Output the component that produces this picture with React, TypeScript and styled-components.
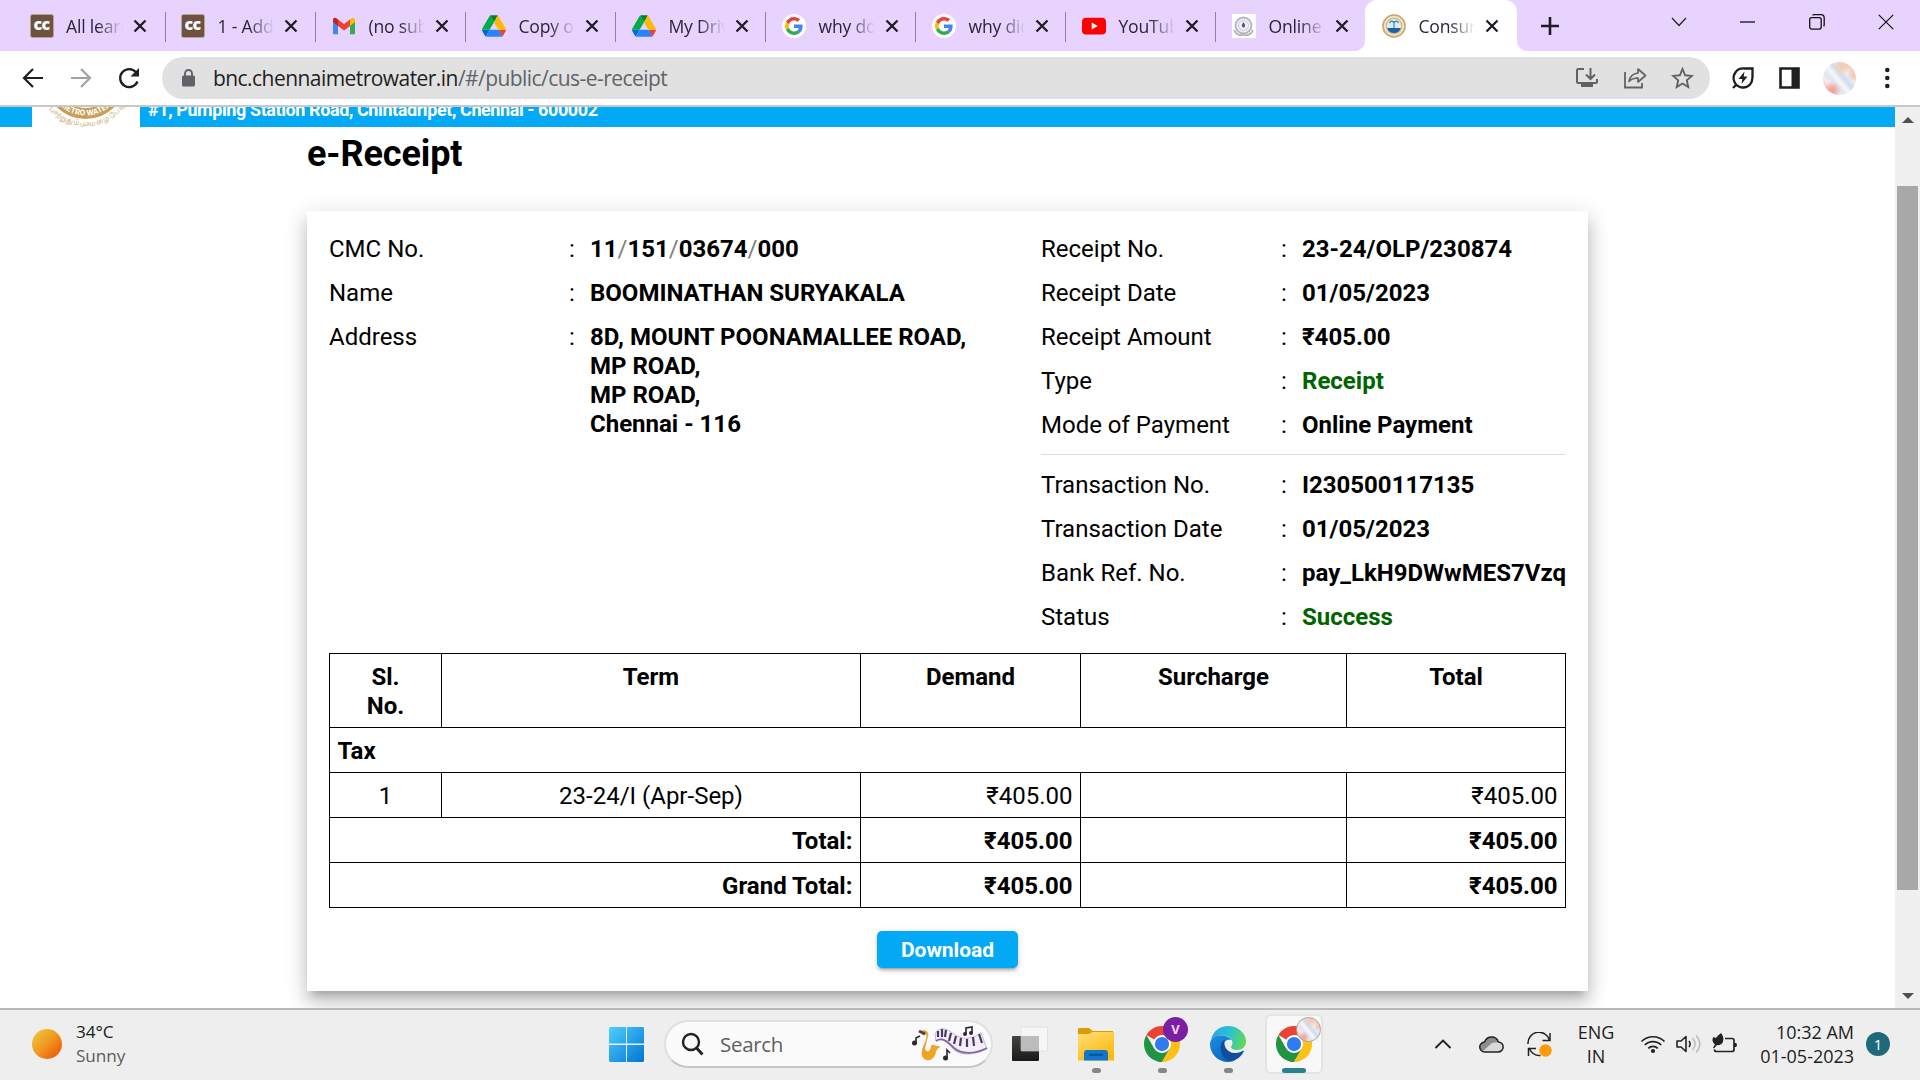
import React from "react";
import styled, { createGlobalStyle } from "styled-components";

const UI = `"Open Sans", "Noto Sans", sans-serif`;

const GlobalStyle = createGlobalStyle`
  * { box-sizing: border-box; }
  html, body { margin: 0; padding: 0; }
  body { width: 1920px; height: 1080px; overflow: hidden; background: #fff; font-family: Roboto, sans-serif; color: #000; }
  svg { display: block; flex: none; }
`;

const Screen = styled.div`
  width: 1920px;
  height: 1080px;
  display: flex;
  flex-direction: column;
  overflow: hidden;
`;

/* ---------- browser chrome ---------- */

const TabStrip = styled.div`
  height: 51px;
  flex: none;
  background: #e8d3ff;
  display: flex;
  padding-left: 14.8px;
  font-family: ${UI};
`;

const Tab = styled.div<{ $active?: boolean }>`
  width: ${(p) => (p.$active ? 152 : 150)}px;
  flex: none;
  display: flex;
  align-items: center;
  position: relative;
  background: ${(p) => (p.$active ? "#fff" : "transparent")};
  border-radius: 12px 12px 0 0;
  &::before, &::after {
    content: ${(p) => (p.$active ? '""' : "none")};
    position: absolute;
    bottom: 0;
    width: 10px;
    height: 10px;
  }
  &::before { left: -10px; background: radial-gradient(circle at 0 0, transparent 9.5px, #fff 10.2px); }
  &::after { right: -10px; background: radial-gradient(circle at 100% 0, transparent 9.5px, #fff 10.2px); }
`;

const Separator = styled.i<{ $show: boolean; $gap: number }>`
  width: 1.5px;
  height: 30px;
  background: ${(p) => (p.$show ? "#8f8399" : "transparent")};
  margin: 2px ${(p) => p.$gap}px 0 0;
`;

const TabTitle = styled.span`
  width: 57px;
  margin-left: 12px;
  font-size: 17.6px;
  line-height: 24px;
  letter-spacing: -0.2px;
  white-space: nowrap;
  overflow: hidden;
  color: #2c2533;
  mask-image: linear-gradient(90deg, #000 55%, transparent 100%);
`;

const TabClose = styled.span`
  margin-left: 10px;
`;

const NewTab = styled.div`
  width: 66px;
  display: flex;
  align-items: center;
  justify-content: center;
`;

const WindowControls = styled.div`
  margin-left: auto;
  display: flex;
  height: 44px;
`;

const WindowButton = styled.div`
  width: 69px;
  display: flex;
  align-items: center;
  justify-content: center;
`;

const Toolbar = styled.div`
  height: 56px;
  flex: none;
  background: #fff;
  border-bottom: 2px solid #c8c8c8;
  display: flex;
  align-items: center;
  padding-left: 9px;
`;

const NavButton = styled.div`
  width: 48px;
  display: flex;
  justify-content: center;
`;

const Omnibox = styled.div`
  width: 1548px;
  height: 42px;
  margin-left: 9px;
  border-radius: 21px;
  background: #e1e1e1;
  display: flex;
  align-items: center;
  padding: 0 16px 0 20px;
  font-family: ${UI};
`;

const Url = styled.span`
  margin-left: 18px;
  font-size: 21px;
  line-height: 28px;
  letter-spacing: -0.555px;
  color: #5f6368;
  b { font-weight: 400; color: #1f1f22; }
`;

const OmniActions = styled.div`
  margin-left: auto;
  display: flex;
  align-items: center;
  gap: 24px;
`;

const ToolbarActions = styled.div`
  display: flex;
  align-items: center;
  margin-left: 21px;
  gap: 22px;
`;

const Avatar = styled.div<{ $size: number; $ring?: boolean }>`
  width: ${(p) => p.$size}px;
  height: ${(p) => p.$size}px;
  border-radius: 50%;
  border: ${(p) => (p.$ring ? "1.5px solid #a9a5a8" : "0")};
  background:
    radial-gradient(circle at 28% 86%, #f0a5a0 0 6%, transparent 24%),
    radial-gradient(circle at 60% 8%, #f4cdb9 0 10%, transparent 30%),
    radial-gradient(circle at 94% 40%, #f5cabd 0 5%, transparent 20%),
    linear-gradient(50deg, #f5c3bf 0 14%, #f9e9e5 24%, #dde6f3 36%, #faf6f5 46%, #cbdcf1 58%, #f6f1f2 70%, #f6d5cb 82%, #f7ece8);
`;

/* ---------- page ---------- */

const Viewport = styled.div`
  height: 901px;
  flex: none;
  display: flex;
  overflow: hidden;
`;

const Page = styled.main`
  width: 1895px;
  overflow: hidden;
  background: #fff;
`;

const Banner = styled.div`
  height: 20px;
  overflow: hidden;
  background: #03a9f4;
  display: flex;
  padding-left: 32px;
  color: #fff;
`;

const LogoBox = styled.div`
  width: 108px;
  height: 20px;
  background: #fff;
`;

const BannerText = styled.div`
  margin: -8px 0 0 8px;
  font-size: 18px;
  font-weight: 700;
  line-height: 22px;
  letter-spacing: -0.41px;
  white-space: nowrap;
`;

const Content = styled.div`
  width: 1281px;
  margin: 0 auto;
`;

const Heading = styled.h1`
  margin: 0;
  padding-top: 6px;
  height: 84px;
  font-size: 36px;
  font-weight: 700;
  line-height: 42px;
  letter-spacing: -0.1px;
`;

const Card = styled.section`
  height: 780px;
  padding: 16px 22px 0;
  background: #fff;
  box-shadow: 0 7.5px 7.5px -4.5px rgba(0, 0, 0, 0.2), 0 12px 15px 1.5px rgba(0, 0, 0, 0.14),
    0 4.5px 21px 3px rgba(0, 0, 0, 0.12);
`;

const Details = styled.div`
  display: grid;
  grid-template-columns: 712px 1fr;
`;

const Field = styled.div`
  display: grid;
  grid-template-columns: 240px 21px max-content;
  padding: 7.5px 0;
  font-size: 24px;
  line-height: 29px;
`;

const Value = styled.div<{ $good?: boolean }>`
  font-weight: 700;
  white-space: pre-line;
  color: ${(p) => (p.$good ? "#006400" : "#000")};
`;

const Slash = styled.span`
  font-weight: 400;
  color: #808080;
`;

const Rule = styled.div`
  height: 1px;
  margin: 7px 0 8px;
  background: #dcdcdc;
`;

const Table = styled.table`
  width: 1237px;
  margin-top: 13.5px;
  table-layout: fixed;
  border-collapse: collapse;
  font-size: 24px;
  line-height: 29px;
`;

const Cell = styled.td<{ $align?: string; $bold?: boolean }>`
  border: 1px solid #000;
  padding: 9px 7.5px 6px;
  vertical-align: top;
  text-align: ${(p) => p.$align || "left"};
  font-weight: ${(p) => (p.$bold ? 700 : 400)};
`;

const Actions = styled.div`
  margin-top: 23px;
  display: flex;
  justify-content: center;
`;

const DownloadButton = styled.button`
  width: 141px;
  height: 37px;
  border: 0;
  border-radius: 5px;
  padding: 1px 0 0;
  background: #03a9f4;
  color: #fff;
  font: 700 21px/37px Roboto, sans-serif;
  box-shadow: 0 4px 2px -3px rgba(0, 0, 0, 0.2), 0 3px 3px rgba(0, 0, 0, 0.14), 0 1.5px 7px rgba(0, 0, 0, 0.12);
`;

const Scrollbar = styled.div`
  width: 25px;
  background: #f0f0f0;
  display: flex;
  flex-direction: column;
  align-items: center;
  padding: 10px 0 9px;
`;

const Thumb = styled.div`
  width: 21px;
  height: 704px;
  margin: 63px 0 auto;
  background: #a8a8a8;
`;

/* ---------- taskbar ---------- */

const Taskbar = styled.footer`
  flex: 1;
  background: #eeeeee;
  border-top: 2px solid #bababa;
  padding-bottom: 2px;
  display: flex;
  align-items: center;
  font-family: ${UI};
  color: #1d1d1d;
`;

const Weather = styled.div`
  width: 577px;
  padding-left: 32px;
  display: flex;
  align-items: center;
  gap: 14px;
  font-size: 17.2px;
  line-height: 24px;
  letter-spacing: -0.1px;
  small { display: block; font-size: inherit; color: #5c5c5c; }
`;

const Sun = styled.i`
  width: 30px;
  height: 30px;
  border-radius: 50%;
  background: linear-gradient(135deg, #eec03a 12%, #f0971f 50%, #f0670d 80%);
`;

const SearchPill = styled.div`
  width: 329px;
  height: 48px;
  margin-left: 20px;
  border: 2px solid #e0e0e0;
  border-bottom-color: #c6c6c6;
  border-radius: 24px;
  background: #fafafa;
  display: flex;
  align-items: center;
  padding: 0 3px 0 15px;
  span { margin-left: 15px; font-size: 20.5px; letter-spacing: -0.3px; color: #5f5f5f; }
  svg:last-child { margin-left: auto; }
`;

const StartSlot = styled.div`
  width: 67px;
  padding-left: 32px;
`;

const Apps = styled.div`
  display: flex;
  margin-left: 4px;
`;

const AppSlot = styled.div<{ $active?: boolean }>`
  width: 58px;
  height: 60px;
  margin: 0 4px;
  border-radius: 6px;
  border: 2px solid ${(p) => (p.$active ? "#e4e4e4" : "transparent")};
  background: ${(p) => (p.$active ? "#f8f8f8" : "transparent")};
  display: flex;
  flex-direction: column;
  align-items: center;
  padding-top: 10px;
  position: relative;
`;

const Running = styled.i<{ $active?: boolean }>`
  width: ${(p) => (p.$active ? 24 : 9)}px;
  height: 5px;
  flex: none;
  margin-top: 6px;
  border-radius: 3px;
  background: ${(p) => (p.$active ? "#28838f" : "#868686")};
`;

const Badge = styled.div`
  position: absolute;
  top: 1px;
  right: 1px;
  width: 25px;
  height: 25px;
  border-radius: 50%;
  background: #7b1fa2;
  color: #f0d9f7;
  font: 700 13px/25px "Open Sans", sans-serif;
  text-align: center;
`;

const BadgeAvatar = styled.div`
  position: absolute;
  top: 1px;
  right: 0;
`;

const Tray = styled.div`
  margin-left: auto;
  display: flex;
  align-items: center;
  padding-right: 30px;
`;

const TrayItem = styled.div<{ $w: number; $nudge?: number }>`
  width: ${(p) => p.$w}px;
  padding-right: ${(p) => p.$nudge || 0}px;
  display: flex;
  justify-content: center;
`;

const TrayText = styled.div<{ $w: number; $align: string }>`
  width: ${(p) => p.$w}px;
  text-align: ${(p) => p.$align};
  font-size: 18px;
  line-height: 24px;
  letter-spacing: -0.02px;
  white-space: pre-line;
`;

const Count = styled.div`
  width: 24px;
  height: 24px;
  margin-left: 12px;
  border-radius: 50%;
  background: #20697a;
  color: #fff;
  font-size: 15px;
  line-height: 24px;
  text-align: center;
`;

/* ---------- drawings ---------- */

const stroke = (c: string, w: number) => ({ fill: "none", stroke: c, strokeWidth: w });

const CcFav = () => (
  <svg width="24" height="24">
    <rect x=".5" y=".5" width="23" height="23" rx="2" fill="#6d5241" stroke="#b7a48f" />
    <text x="11.600" y="16" textAnchor="middle" fontFamily="Open Sans" fontWeight="800" fontSize="16" letterSpacing="-.6" fill="#fff">cc</text>
  </svg>
);
const GmailFav = () => (
  <svg width="24" height="24" viewBox="0 0 24 24">
    <path d="M1 6v13c0 .9.6 1.3 1.4 1.3H6V11z" fill="#4285f4" />
    <path d="M23 6v13c0 .9-.6 1.3-1.4 1.3H18V11z" fill="#34a853" />
    <path d="M18 5.4 20 4c1.400-.9 3 .1 3 1.700V8l-5 3.900z" fill="#fbbc04" />
    <path d="M6 5.400 12 10l6-4.600v6.500l-6 4.600-6-4.600z" fill="#ea4335" />
    <path d="M6 5.400 4 4C2.600 3.100 1 4.100 1 5.700V8l5 3.900z" fill="#c5221f" />
  </svg>
);
const DriveFav = () => (
  <svg width="24" height="24" viewBox="0 0 87.3 78">
    <path d="m6.6 66.850 3.850 6.650c.8 1.400 1.950 2.500 3.300 3.300l13.750-23.800h-27.500c0 1.550.4 3.100 1.200 4.500z" fill="#0066da" />
    <path d="m43.650 25-13.750-23.800c-1.350.8-2.500 1.900-3.300 3.300l-25.400 44a9.060 9.060 0 0 0 -1.200 4.500h27.500z" fill="#00ac47" />
    <path d="m73.550 76.800c1.350-.8 2.500-1.900 3.300-3.300l1.600-2.750 7.650-13.250c.8-1.400 1.200-2.950 1.200-4.500h-27.502l5.852 11.500z" fill="#ea4335" />
    <path d="m43.650 25 13.750-23.800c-1.350-.8-2.900-1.200-4.500-1.200h-18.500c-1.600 0-3.150.45-4.500 1.200z" fill="#00832d" />
    <path d="m59.800 53h-32.300l-13.750 23.800c1.350.8 2.900 1.200 4.500 1.200h50.800c1.600 0 3.150-.45 4.500-1.200z" fill="#2684fc" />
    <path d="m73.400 26.500-12.700-22c-.8-1.400-1.950-2.500-3.300-3.300l-13.750 23.800 16.150 28h27.450c0-1.550-.4-3.100-1.200-4.500z" fill="#ffba00" />
  </svg>
);
const GoogleFav = () => (
  <svg width="24" height="24" viewBox="0 0 24 24">
    <circle cx="12" cy="12" r="12" fill="#fff" />
    <g transform="translate(3 3) scale(.375)">
      <path fill="#EA4335" d="M24 9.500c3.540 0 6.710 1.220 9.210 3.600l6.850-6.850C35.900 2.380 30.470 0 24 0 14.620 0 6.510 5.380 2.560 13.220l7.980 6.190C12.430 13.720 17.740 9.500 24 9.500z" />
      <path fill="#4285F4" d="M46.980 24.550c0-1.570-.15-3.090-.38-4.550H24v9.020h12.940c-.58 2.960-2.260 5.480-4.780 7.180l7.730 6c4.510-4.180 7.090-10.360 7.090-17.650z" />
      <path fill="#FBBC05" d="M10.530 28.590c-.48-1.450-.76-2.990-.76-4.590s.27-3.140.76-4.590l-7.980-6.190C.92 16.460 0 20.120 0 24c0 3.880.92 7.540 2.560 10.780l7.970-6.190z" />
      <path fill="#34A853" d="M24 48c6.480 0 11.930-2.130 15.890-5.810l-7.730-6c-2.150 1.450-4.920 2.300-8.160 2.300-6.260 0-11.570-4.220-13.470-9.910l-7.980 6.190C6.510 42.620 14.620 48 24 48z" />
    </g>
  </svg>
);
const YoutubeFav = () => (
  <svg width="24" height="24" viewBox="0 0 24 24">
    <rect y="3.800" width="24" height="16.600" rx="4" fill="#f00" />
    <path d="M9.700 8.500v7l6-3.500z" fill="#fff" />
  </svg>
);
const OnlineFav = () => (
  <svg width="24" height="24" viewBox="0 0 24 24">
    <rect width="24" height="24" fill="#fff" />
    <circle cx="11.500" cy="11.500" r="8" fill="#f1f0f6" stroke="#b3b3c2" strokeWidth="1.800" />
    <circle cx="11.500" cy="11.500" r="5" {...stroke("#c9c9d6", 1)} />
    <path d="M11.500 8c1.200 2 1.700 2.700 1.700 3.700a1.700 1.700 0 0 1-3.400 0c0-1 .5-1.700 1.700-3.700z" fill="#5a5596" />
    <path d="M2 16c2 5 6 6 9.500 4.600C15 22 19 21 21 16" {...stroke("#b4b4c0", 2)} />
  </svg>
);
const MetroFav = () => (
  <svg width="24" height="24" viewBox="0 0 24 24">
    <circle cx="12" cy="12" r="11" fill="#f3e6cc" stroke="#c9a566" strokeWidth="1.600" />
    <circle cx="12" cy="12" r="7.800" fill="#d9edf6" stroke="#d8bb85" strokeWidth="1.400" />
    <path d="M5.200 14h13.600c-.9 3.400-3.400 5-6.800 5s-5.900-1.600-6.800-5z" fill="#1b5fa6" />
    <path d="M12 7v7M7.500 9c1-2.500 3.500-2.500 4.500 0 1-2.500 3.500-2.500 4.500 0" {...stroke("#3f86bb", 1.2)} />
  </svg>
);
const CloseX = () => (
  <svg width="14" height="14" viewBox="0 0 14 14"><path d="m1.500 1.500 11 11M12.500 1.500l-11 11" {...stroke("#1f1b24", 2.3)} /></svg>
);
const Arrow = ({ c, flip }: { c: string; flip?: boolean }) => (
  <svg width="24" height="24" viewBox="0 0 24 24">
    <path d={flip ? "M2 12h18.500M12 3l9 9-9 9" : "M22 12H3.500M12 3l-9 9 9 9"} {...stroke(c, 2.2)} />
  </svg>
);

const MetroLogo = () => (
  <svg width="108" height="20" viewBox="0 0 108 20">
    <defs>
      <path id="inner" d="M16-29a37.500 37.500 0 0 0 75 0" />
      <path id="outer" d="M5.500-29a48 48 0 0 0 96 0" />
    </defs>
    <circle cx="53.500" cy="-29" r="41" fill="#c9a05a" />
    <circle cx="53.500" cy="-29" r="30" fill="#fff" />
    <text fontFamily="Roboto, sans-serif" fontWeight="700" fontSize="8" fill="#fff" textAnchor="middle">
      <textPath href="#inner" startOffset="50%">METRO WATER</textPath>
    </text>
    <text fontFamily="sans-serif" fontSize="7.500" fontWeight="400" fill="#c09450" textAnchor="middle">
      <textPath href="#outer" startOffset="50%">போற்றுதும் மாமழை போற்</textPath>
    </text>
  </svg>
);

const ChromeIcon = () => (
  <svg width="36" height="36" viewBox="0 0 48 48">
    <path d="M24 24 3.220 12A24 24 0 0 1 44.780 12z" fill="#ea4335" />
    <path d="M3.220 12A24 24 0 0 0 24 48l10.400-18H13.600z" fill="#229342" />
    <path d="M24 48a24 24 0 0 0 20.780-36H24l10.400 18z" fill="#fbc116" />
    <circle cx="24" cy="24" r="12" fill="#fff" />
    <circle cx="24" cy="24" r="9.500" fill="#2f7bf0" />
  </svg>
);

const EdgeIcon = () => (
  <svg width="36" height="36" viewBox="0 0 36 36">
    <defs>
      <linearGradient id="e1" x1="0" y1=".4" x2="1" y2=".6"><stop offset="0" stopColor="#2aa5e8" /><stop offset=".5" stopColor="#2cc3d0" /><stop offset="1" stopColor="#64d94f" /></linearGradient>
      <linearGradient id="e2" x1="0" y1="0" x2=".4" y2="1"><stop offset="0" stopColor="#1d8ee0" /><stop offset="1" stopColor="#0a6cc4" /></linearGradient>
    </defs>
    <path d="M1 14C3 5 10 0 18 0c11 0 18 8 18 15 0 6-4 9-9 9-4 0-6-1.600-6-3 0-1 1.500-1.500 1.500-4 0-4-4-7.500-10-7.500C7 9.500 3 12 1 14z" fill="url(#e1)" />
    <path d="M0 18c0-5 5-8.500 11-8.500 5 0 9 2 10.500 4.500-3-1-8 0-8 6 0 7 5 15 12 14-2 1.300-4.500 2-7.500 2C8 36 0 28 0 18z" fill="url(#e2)" />
    <path d="M10.500 21c0-4 2-6.500 4.500-7.500-2 5 1 13.500 10 13.500 4 0 6.500-1.500 7.500-2 1-.5 1.500.3 1 1-3 5.500-8 9-13 9-6 0-10-7-10-14z" fill="#114e9e" />
  </svg>
);

const MusicArt = () => (
  <svg width="76" height="36" viewBox="0 0 76 36">
    <path d="M23 8C26 2 32 1 39 6c8 6 16 10 30 1l6 16c-12 6-25 7-33 1C35 15 30 10 24 15z" fill="#f4eefa" stroke="#b9a6cc" strokeWidth=".8" />
    <path d="M24 15c6-4 11 0 18 7 8 7 21 6 33 0" {...stroke("#8467a6", 1.8)} />
    <path d="M26 5v6M30 3v8M34 4l-1 7M39 7l-2 8M44 10l-2 8M49 12l-1 8M55 13v8M61 11l1 9M67 8l3 9" {...stroke("#4a3a60", 2.200)} />
    <path d="M9 6c3-3 7-1 7 3l-3 12c-1 6 5 6 6 1l1-3 8 2c-3 1-4 3-5 7-2 8-13 8-13-1 0-6 5-12 5-17 0-2-2-2-4-1z" fill="#f0a521" stroke="#d98e1a" strokeWidth=".5" />
    <path d="m7 5 6 3" {...stroke("#5b3a52", 3)} />
    <path d="M4 17v-5l4-2M35 31v-7l3 3M54 8V2l6-1v6" {...stroke("#2c2633", 1.6)} />
    <g fill="#2c2633"><circle cx="2.500" cy="17" r="2.500" /><circle cx="33.500" cy="32" r="2.500" /><circle cx="53" cy="8" r="2" /><circle cx="59" cy="7" r="2" /></g>
  </svg>
);

const StartIcon = () => (
  <svg width="35" height="35" viewBox="0 0 35 35">
    <defs>
      <linearGradient id="win" x1="0" y1="0" x2="1" y2="1"><stop offset="0" stopColor="#4fd0ff" /><stop offset="1" stopColor="#0074d3" /></linearGradient>
    </defs>
    <path d="M1 0h16v16.600H0V1zM18 0h16l1 1v15.600H18zM0 18h17v17H1l-1-1zM18 18h17v16l-1 1H18z" fill="url(#win)" />
  </svg>
);

/* ---------- data ---------- */

const tabs: [React.FC, string][] = [
  [CcFav, "All learn"], [CcFav, "1 - Add"], [GmailFav, "(no subject)"], [DriveFav, "Copy of"], [DriveFav, "My Drive"],
  [GoogleFav, "why do"], [GoogleFav, "why did"], [YoutubeFav, "YouTube"], [OnlineFav, "Online"], [MetroFav, "Consumer"],
];

const receipt: [string, string, boolean?][] = [
  ["Receipt No.", "23-24/OLP/230874"],
  ["Receipt Date", "01/05/2023"],
  ["Receipt Amount", "₹405.00"],
  ["Type", "Receipt", true],
  ["Mode of Payment", "Online Payment"],
];
const transaction: [string, string, boolean?][] = [
  ["Transaction No.", "I230500117135"],
  ["Transaction Date", "01/05/2023"],
  ["Bank Ref. No.", "pay_LkH9DWwMES7Vzq"],
  ["Status", "Success", true],
];

const Item = ({ label, good, children }: { label: string; good?: boolean; children: React.ReactNode }) => (
  <Field>
    <span>{label}</span>
    <span>:</span>
    <Value $good={good}>{children}</Value>
  </Field>
);

export default function App() {
  return (
    <Screen>
      <GlobalStyle />
      <TabStrip>
        {tabs.map(([Icon, title], i) => (
          <Tab key={i} $active={i === 9}>
            <Separator $show={i > 0 && i < 9} $gap={i === 0 ? 13.7 : i === 1 ? 15.2 : 16.2} />
            <Icon />
            <TabTitle>{title}</TabTitle>
            <TabClose><CloseX /></TabClose>
          </Tab>
        ))}
        <NewTab>
          <svg width="18" height="18"><path d="M9 0v18M0 9h18" {...stroke("#1f1b24", 2.6)} /></svg>
        </NewTab>
        <WindowControls>
          <WindowButton><svg width="16" height="10"><path d="m1 1 7 7.500L15 1" {...stroke("#222", 1.2)} /></svg></WindowButton>
          <WindowButton><svg width="16" height="2"><path d="M0 1h15" {...stroke("#111", 1.3)} /></svg></WindowButton>
          <WindowButton>
            <svg width="16" height="16"><rect x=".7" y="3.600" width="11.500" height="11.500" rx="2" {...stroke("#111", 1.3)} /><path d="M3.500 1.200C4 .8 4.500.7 5 .7h7a3.200 3.200 0 0 1 3.200 3.200v7c0 .6-.2 1-.6 1.500" {...stroke("#111", 1.3)} /></svg>
          </WindowButton>
          <WindowButton><svg width="16" height="16"><path d="m.8.8 14.400 14.400M15.200.8.8 15.200" {...stroke("#111", 1.2)} /></svg></WindowButton>
        </WindowControls>
      </TabStrip>

      <Toolbar>
        <NavButton><Arrow c="#1f1f22" /></NavButton>
        <NavButton><Arrow c="#a2a2a4" flip /></NavButton>
        <NavButton>
          <svg width="24" height="24" viewBox="0 0 24 24"><path d="M20.500 15.500A9 9 0 1 1 19 6.200" {...stroke("#1f1f22", 2.3)} /><path d="M22 2v8.500h-8.500z" fill="#1f1f22" /></svg>
        </NavButton>
        <Omnibox>
          <svg width="13" height="18" viewBox="0 0 13 18"><rect y="6.500" width="13" height="11" rx="1.500" fill="#5f6368" /><path d="M3 7V4.500a3.500 3.500 0 0 1 7 0V7" {...stroke("#5f6368", 1.9)} /></svg>
          <Url><b>bnc.chennaimetrowater.in</b>/#/public/cus-e-receipt</Url>
          <OmniActions>
            <svg width="24" height="22" viewBox="0 0 24 22">
              <path d="M9 2H3.500A1.500 1.500 0 0 0 2 3.500v11A1.500 1.500 0 0 0 3.500 16h17a1.500 1.500 0 0 0 1.500-1.500V12M15.500 1v10M11 7.500l4.500 4.500L20 7.500" {...stroke("#5f6368", 2)} />
              <path d="M6 16h12v4H6z" fill="#5f6368" />
            </svg>
            <svg width="24" height="22" viewBox="0 0 24 22">
              <path d="M2 5v15.500h17V16" {...stroke("#5f6368", 1.8)} />
              <path d="M6 14.500C7 9 10 6.500 15 6V2l7.500 6.500L15 15v-4c-4 0-6.500 1-9 3.500z" {...stroke("#5f6368", 1.7)} strokeLinejoin="round" />
            </svg>
            <svg width="23" height="22" viewBox="0 0 23 22"><path d="m11.500 2 2.600 6.300 6.800.6-5.100 4.500 1.500 6.600-5.800-3.500L5.700 20l1.500-6.600L2.100 8.900l6.800-.6z" {...stroke("#5f6368", 1.9)} /></svg>
          </OmniActions>
        </Omnibox>
        <ToolbarActions>
          <svg width="24" height="24" viewBox="0 0 24 24">
            <path d="M21.500 2.500H13A9.500 9.500 0 1 0 19 18.500c2-2.300 2.500-4.500 2.500-7.500z" {...stroke("#1f1f22", 2.3)} />
            <path d="m2 22 3.500-3.500" {...stroke("#1f1f22", 2.3)} />
            <path d="m13.500 5.500-6 7.500h3.800l-.8 5 6-7.500h-3.800z" fill="#1f1f22" />
          </svg>
          <svg width="24" height="24" viewBox="0 0 24 24"><path d="M3.500 2.500h18v19h-18z" {...stroke("#1f1f22", 2.6)} /><path d="M14.500 2H22v20h-7.500z" fill="#1f1f22" /></svg>
          <Avatar $size={33} />
          <svg width="18" height="22" viewBox="0 0 18 22" fill="#1f1f22"><circle cx="9.300" cy="3" r="2.300" /><circle cx="9.300" cy="11" r="2.300" /><circle cx="9.300" cy="19" r="2.300" /></svg>
        </ToolbarActions>
      </Toolbar>

      <Viewport>
        <Page>
          <Banner>
            <LogoBox><MetroLogo /></LogoBox>
            <BannerText>#1, Pumping Station Road, Chintadripet, Chennai - 600002</BannerText>
          </Banner>
          <Content>
            <Heading>e-Receipt</Heading>
            <Card>
              <Details>
                <div>
                  <Item label="CMC No.">11<Slash>/</Slash>151<Slash>/</Slash>03674<Slash>/</Slash>000</Item>
                  <Item label="Name">BOOMINATHAN SURYAKALA</Item>
                  <Item label="Address">{"8D, MOUNT POONAMALLEE ROAD,\nMP ROAD,\nMP ROAD,\nChennai - 116"}</Item>
                </div>
                <div>
                  {receipt.map(([l, v, g]) => <Item key={l} label={l} good={g}>{v}</Item>)}
                  <Rule />
                  {transaction.map(([l, v, g]) => <Item key={l} label={l} good={g}>{v}</Item>)}
                </div>
              </Details>
              <Table>
                <colgroup>
                  <col width="112" /><col width="419" /><col width="220" /><col width="266" /><col />
                </colgroup>
                <tbody>
                  <tr>
                    <Cell $bold $align="center">Sl.<br />No.</Cell>
                    {["Term", "Demand", "Surcharge", "Total"].map((h) => <Cell key={h} $bold $align="center">{h}</Cell>)}
                  </tr>
                  <tr><Cell $bold colSpan={5}>Tax</Cell></tr>
                  <tr>
                    <Cell $align="center">1</Cell>
                    <Cell $align="center">23-24/I (Apr-Sep)</Cell>
                    <Cell $align="right">₹405.00</Cell>
                    <Cell />
                    <Cell $align="right">₹405.00</Cell>
                  </tr>
                  {["Total:", "Grand Total:"].map((t) => (
                    <tr key={t}>
                      <Cell $bold $align="right" colSpan={2}>{t}</Cell>
                      <Cell $bold $align="right">₹405.00</Cell>
                      <Cell />
                      <Cell $bold $align="right">₹405.00</Cell>
                    </tr>
                  ))}
                </tbody>
              </Table>
              <Actions><DownloadButton>Download</DownloadButton></Actions>
            </Card>
          </Content>
        </Page>
        <Scrollbar>
          <svg width="12" height="6"><path d="M0 6h12L6 0z" fill="#505050" /></svg>
          <Thumb />
          <svg width="12" height="6"><path d="M0 0h12L6 6z" fill="#505050" /></svg>
        </Scrollbar>
      </Viewport>

      <Taskbar>
        <Weather><Sun /><div>34°C<small>Sunny</small></div></Weather>
        <StartSlot><StartIcon /></StartSlot>
        <SearchPill>
          <svg width="24" height="24" viewBox="0 0 24 24"><circle cx="10" cy="10" r="8" {...stroke("#222", 2.4)} /><path d="m15.500 16 6 6.500" {...stroke("#222", 2.8)} /></svg>
          <span>Search</span>
          <MusicArt />
        </SearchPill>
        <Apps>
          <AppSlot>
            <svg width="36" height="36" viewBox="0 0 36 36">
              <defs><linearGradient id="tv" x1="0" y1="0" x2="0" y2="1"><stop offset="0" stopColor="#454441" /><stop offset="1" stopColor="#1b1a19" /></linearGradient></defs>
              <rect y="10" width="27" height="25" rx="1" fill="url(#tv)" />
              <rect x="9" y="1" width="26.500" height="24" rx="1" fill="#f6f6f6" stroke="#d8d8d8" strokeWidth=".6" />
              <path d="M9 10h18v15H9z" fill="#bcbcbc" />
            </svg>
          </AppSlot>
          <AppSlot>
            <svg width="36" height="36" viewBox="0 0 36 36">
              <defs><linearGradient id="fo" x1="0" y1="0" x2=".6" y2="1"><stop offset="0" stopColor="#ffdf79" /><stop offset="1" stopColor="#fdb90f" /></linearGradient></defs>
              <path d="M0 3.500C0 2.500.7 2 1.500 2H11l3.500 3H35v8H0z" fill="#dc9a05" />
              <path d="M0 8h11l3.500-2H36v28.500H0z" fill="url(#fo)" />
              <path d="M6 34.500V27a3 3 0 0 1 3-3h18a3 3 0 0 1 3 3v7.500z" fill="#0f76cc" />
              <path d="M11 28.800h14" {...stroke("#0a4f94", 1.8)} />
            </svg>
            <Running />
          </AppSlot>
          <AppSlot><ChromeIcon /><Running /><Badge>V</Badge></AppSlot>
          <AppSlot><EdgeIcon /><Running /></AppSlot>
          <AppSlot $active><ChromeIcon /><Running $active /><BadgeAvatar><Avatar $size={25} $ring /></BadgeAvatar></AppSlot>
        </Apps>
        <Tray>
          <TrayItem $w={50}><svg width="18" height="10"><path d="m1.500 9 7.500-7.500L16.500 9" {...stroke("#222", 1.9)} /></svg></TrayItem>
          <TrayItem $w={46}>
            <svg width="25" height="17" viewBox="0 0 25 17">
              <path d="M6 16a5 5 0 0 1-.5-10C7 2.500 9.500 1 12.500 1c3.500 0 6 2 6.800 5A5 5 0 0 1 19 16z" fill="#d9d9d9" />
              <path d="M5.500 6C7 2.500 9.500 1 12.500 1c3.500 0 6 2 6.800 5l-6.300 1-9 8C0 13.500 0 7 5.500 6z" fill="#8d8d8d" />
              <path d="M6 16a5 5 0 0 1-.5-10C7 2.500 9.500 1 12.500 1c3.500 0 6 2 6.800 5A5 5 0 0 1 19 16z" {...stroke("#222", 1.5)} />
            </svg>
          </TrayItem>
          <TrayItem $w={50}>
            <svg width="25" height="25" viewBox="0 0 25 25">
              <path d="M1 12A11 11 0 0 1 22.500 8M23 1v7.500h-7.500M1.500 24v-7.500H9M2.500 17c2 4 6 7 11 6.500" {...stroke("#222", 1.5)} />
              <circle cx="18.500" cy="18.500" r="6.200" fill="#ff9a0d" />
            </svg>
          </TrayItem>
          <TrayText $w={64} $align="center">{"ENG\nIN"}</TrayText>
          <TrayItem $w={50}>
            <svg width="26" height="20" viewBox="0 0 26 20">
              <path d="M1.500 7.500a16.300 16.300 0 0 1 23 0M4.800 11a11.600 11.600 0 0 1 16.400 0M8.200 14.300a6.800 6.800 0 0 1 9.600 0" {...stroke("#222", 1.7)} />
              <circle cx="13" cy="17" r="2.100" fill="#222" />
            </svg>
          </TrayItem>
          <TrayItem $w={24} $nudge={4}>
            <svg width="25" height="20" viewBox="0 0 25 20">
              <path d="M1 7v6h4l5 4.500v-15L5 7zM13 7c1.500 2 1.500 4 0 6" {...stroke("#222", 1.6)} strokeLinejoin="round" />
              <path d="M16.500 4c3.500 4 3.500 8 0 12M20 1.500c5 5.500 5 11.500 0 17" {...stroke("#bdbdbd", 1.5)} />
            </svg>
          </TrayItem>
          <TrayItem $w={47} $nudge={2}>
            <svg width="25" height="22" viewBox="0 0 25 22">
              <path d="M13 5.500h7a2 2 0 0 1 2 2v9a2 2 0 0 1-2 2H4.500a2 2 0 0 1-2-2" {...stroke("#222", 1.7)} />
              <path d="M22 10h1.500a1.300 1.300 0 0 1 1.300 1.300v1.400a1.300 1.300 0 0 1-1.300 1.300H22z" fill="#222" />
              <path d="M9 0c2 3 3 5 2 8.500-1 3.200-4 4-6 3.500l-3 3.500-1-1 2-3C0 9 0 6 1.500 4l2.500 1C5 3 7 2 9 0z" fill="#222" />
            </svg>
          </TrayItem>
          <TrayText $w={105} $align="right">{"10:32 AM\n01-05-2023"}</TrayText>
          <Count>1</Count>
        </Tray>
      </Taskbar>
    </Screen>
  );
}
